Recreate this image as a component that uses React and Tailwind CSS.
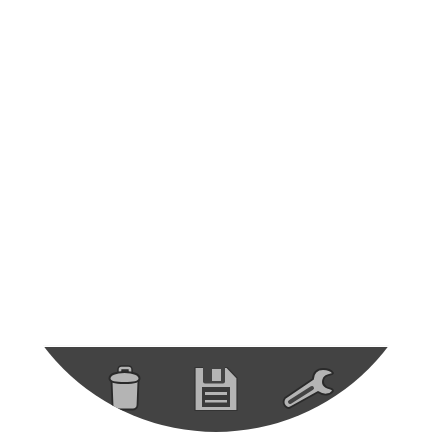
export default function App() {
  return (
    <div className="w-[432px] h-[432px] bg-white">
      <div className="w-[432px] h-[432px] rounded-full overflow-hidden flex flex-col justify-end">
        <div className="border-t border-[#f8f8f8] pt-px">
          <div className="h-[85px] bg-[#434343] flex">
            <div className="ml-[106px] mt-[17px] w-[36px] h-[50px] shrink-0 blur-[0.4px]">
              <svg viewBox="0 0 36 50" className="w-full h-full" strokeLinejoin="round">
                <path d="M14 10V5.500a1.500 1.500 0 0 1 1.500-1.500h7a1.500 1.500 0 0 1 1.500 1.500V10" fill="none" stroke="#2a2a2a" strokeWidth="5.500" />
                <path d="M14 10V5.500a1.500 1.500 0 0 1 1.500-1.500h7a1.500 1.500 0 0 1 1.500 1.500V10" fill="none" stroke="#b4b4b4" strokeWidth="2.600" />
                <path d="M5.500 15 L6.500 41 a4.500 4.500 0 0 0 4.500 4.500 h16 a4.500 4.500 0 0 0 4.500 -4.500 L32.500 15 Z" fill="#b4b4b4" stroke="#2a2a2a" strokeWidth="1.800" />
                <path d="M3.500 14.500c0-4 6-6.500 15-6.500s15 2.500 15 6.500c0 3-6 4.500-15 4.500s-15-1.500-15-4.500z" fill="#b4b4b4" stroke="#2a2a2a" strokeWidth="2" />
              </svg>
            </div>
            <div className="ml-[52px] mt-[19px] w-[44px] h-[46px] shrink-0 blur-[0.4px]">
              <svg viewBox="0 0 44 46" className="w-full h-full">
                <path d="M1 1.500H33L43 12V44.500H1z" fill="#b4b4b4" stroke="#333333" strokeWidth="1.200" strokeLinejoin="round" />
                <path d="M9 1h22v14.500a2 2 0 0 1-2 2h-18a2 2 0 0 1-2-2z" fill="#434343" />
                <rect x="18" y="3" width="9" height="12" fill="#b4b4b4" />
                <rect x="8" y="21" width="28" height="20" fill="#3a3a3a" />
                <rect x="11" y="26" width="22" height="3" fill="#b4b4b4" />
                <rect x="11" y="34" width="22" height="2.500" fill="#b4b4b4" />
              </svg>
            </div>
            <div className="ml-[42px] mt-[19px] w-[58px] h-[46px] shrink-0 blur-[0.4px]">
              <svg viewBox="0 0 58 46" className="w-full h-full">
                <path d="M5 32 L33 13 C33 7 37 3 43 3 C47 3 51 4 53 7 C53 9 46 8 44 12 C42 16 43 19 46 21 C49 23 53 22 53 25 C50 29 44 30 38 26 L11 41 C7 44 1 38 5 32 Z" fill="#b4b4b4" stroke="#2a2a2a" strokeWidth="1.800" strokeLinejoin="round" />
                <path d="M10 36 L32 22" stroke="#434343" strokeWidth="4" strokeLinecap="round" fill="none" />
              </svg>
            </div>
          </div>
        </div>
      </div>
    </div>
  );
}
